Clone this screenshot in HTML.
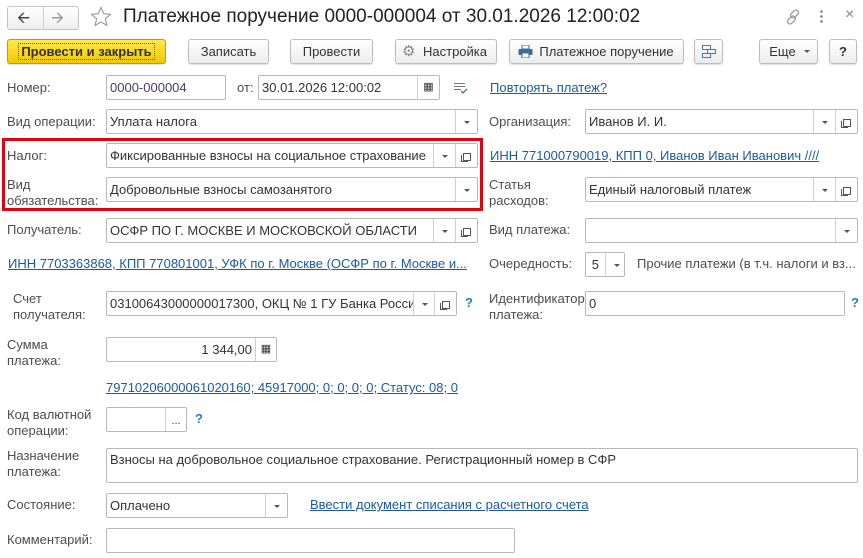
<!DOCTYPE html>
<html><head><meta charset="utf-8"><style>
*{box-sizing:border-box;margin:0;padding:0}
body{width:863px;height:558px;background:#fff;font-family:"Liberation Sans",Arial,sans-serif;font-size:13px;color:#333;position:relative;overflow:hidden}
.a{position:absolute;white-space:nowrap}
.lbl{position:absolute;color:#4d4d4d;line-height:16px;white-space:nowrap}
.in{position:absolute;border:1px solid #b8b8b8;border-radius:2px;background:#fff;height:25px;line-height:23px;padding-left:3px;overflow:hidden;white-space:nowrap;color:#333}
.sb{position:absolute;top:0;bottom:0;width:22px;border-left:1px solid #d0d0d0;background:#fff}
.dd::after{content:"";position:absolute;left:8px;top:11px;border:3px solid transparent;border-top:3px solid #555;border-bottom:0}
.op::before{content:"";position:absolute;left:7px;top:9px;width:6px;height:6px;border:1px solid #555;background:#fff}
.op::after{content:"";position:absolute;left:5px;top:11px;width:6px;height:6px;border-left:1px solid #555;border-bottom:1px solid #555}
.btn{position:absolute;top:39px;height:25px;border:1px solid #bdbdbd;border-radius:3px;background:linear-gradient(#fff,#ececec);text-align:center;line-height:23px;color:#333;box-shadow:0 1px 1px rgba(0,0,0,.12)}
.lnk{position:absolute;color:#1a5aa6;text-decoration:underline;white-space:nowrap}
.q{position:absolute;color:#1e7fd0;font-weight:bold}
</style></head><body>
<div class="a" style="left:7px;top:6px;width:72px;height:24px;border:1px solid #c4c4c4;border-radius:3px;background:linear-gradient(#fff,#eee)"></div>
<div class="a" style="left:43px;top:7px;width:1px;height:22px;background:#d0d0d0"></div>
<div class="a" style="left:17px;top:7px;font-size:16px;color:#444">&#129128;</div>
<div class="a" style="left:51px;top:7px;font-size:16px;color:#999">&#129130;</div>
<svg class="a" style="left:90px;top:6px" width="22" height="22" viewBox="0 0 22 22"><path d="M11 1.5l2.8 6.2 6.7.6-5.1 4.5 1.5 6.6L11 16l-5.9 3.4 1.5-6.6L1.5 8.3l6.7-.6z" fill="none" stroke="#999" stroke-width="1.1"/></svg>
<div class="a" style="left:123px;top:6px;font-size:19px;color:#222">Платежное поручение 0000-000004 от 30.01.2026 12:00:02</div>
<svg class="a" style="left:784px;top:8px" width="18" height="18" viewBox="0 0 18 18"><g fill="none" stroke="#999" stroke-width="1.3"><rect x="8" y="1.5" width="5" height="9" rx="2.5" transform="rotate(45 10.5 6)"/><rect x="5" y="7.5" width="5" height="9" rx="2.5" transform="rotate(45 7.5 12)"/></g></svg>
<div class="a" style="left:820px;top:9px;width:3px;height:15px;background:radial-gradient(circle,#888 1.2px,transparent 1.5px) 0 0/3px 5px"></div>
<div class="a" style="left:845px;top:6px;font-size:16px;color:#888">×</div>

<div class="btn" style="left:7px;width:159px;background:linear-gradient(#ffe94d,#f2c800);border-color:#b9a200;font-weight:bold;color:#333"><span style="outline:1px dotted #555;padding:0 2px">Провести и закрыть</span></div>
<div class="btn" style="left:188px;width:81px">Записать</div>
<div class="btn" style="left:290px;width:83px">Провести</div>
<div class="btn" style="left:395px;width:102px;padding-left:18px">Настройка<span class="a" style="left:6px;top:0;color:#888;font-size:15px">⚙</span></div>
<div class="btn" style="left:509px;width:175px;padding-left:20px">Платежное поручение<svg class="a" style="left:8px;top:5px" width="15" height="13" viewBox="0 0 15 13"><rect x="4" y="0" width="7" height="4" fill="#fff" stroke="#3b6e9a"/><rect x="0.5" y="4" width="14" height="6" rx="1" fill="#3b6e9a"/><rect x="4" y="8" width="7" height="5" fill="#fff" stroke="#3b6e9a"/></svg></div>
<div class="btn" style="left:694px;width:29px"><svg style="margin-top:4px" width="16" height="15" viewBox="0 0 16 15"><g fill="none" stroke="#3b7bbf"><rect x="1.5" y="1.5" width="8" height="4"/><rect x="6.5" y="5.5" width="8" height="4"/><rect x="1.5" y="9.5" width="8" height="4"/></g></svg></div>
<div class="btn" style="left:759px;width:59px;padding-right:12px">Еще<span class="a" style="left:44px;top:10px;border:3px solid transparent;border-top:3px solid #555;border-bottom:0"></span></div>
<div class="btn" style="left:829px;width:28px;font-weight:bold">?</div>

<div class="lbl" style="left:7px;top:80px">Номер:</div>
<div class="in" style="left:106px;top:75px;width:120px;color:#4a3b6b">0000-000004</div>
<div class="lbl" style="left:237px;top:80px">от:</div>
<div class="in" style="left:258px;top:75px;width:182px">30.01.2026 12:00:02<div class="sb" style="right:0;text-align:center;font-size:11px">▦</div></div>
<svg class="a" style="left:453px;top:82px" width="15" height="13" viewBox="0 0 15 13"><g stroke="#777"><path d="M1 1.5h11M1 4.5h11M1 7.5h7"/></g><path d="M8 9l2 2 4-4" stroke="#3aa035" stroke-width="1.5" fill="none"/></svg>
<div class="lnk" style="left:490px;top:80px">Повторять платеж?</div>

<div class="lbl" style="left:7px;top:114px">Вид операции:</div>
<div class="in" style="left:106px;top:109px;width:372px">Уплата налога<div class="sb dd" style="right:0"></div></div>
<div class="lbl" style="left:489px;top:114px">Организация:</div>
<div class="in" style="left:585px;top:109px;width:273px">Иванов И. И.<div class="sb dd" style="right:22px"></div><div class="sb op" style="right:0"></div></div>

<div class="a" style="left:2px;top:138px;width:481px;height:73px;border:3px solid #e3000f"></div>
<div class="lbl" style="left:7px;top:148px">Налог:</div>
<div class="in" style="left:106px;top:143px;width:372px">Фиксированные взносы на социальное страхование<div class="sb dd" style="right:22px"></div><div class="sb op" style="right:0"></div></div>
<div class="lnk" style="left:490px;top:148px">ИНН 771000790019, КПП 0, Иванов Иван Иванович ////</div>
<div class="lbl" style="left:7px;top:177px">Вид<br>обязательства:</div>
<div class="in" style="left:106px;top:177px;width:372px">Добровольные взносы самозанятого<div class="sb dd" style="right:0"></div></div>
<div class="lbl" style="left:489px;top:177px">Статья<br>расходов:</div>
<div class="in" style="left:585px;top:177px;width:273px">Единый налоговый платеж<div class="sb dd" style="right:22px"></div><div class="sb op" style="right:0"></div></div>

<div class="lbl" style="left:7px;top:222px">Получатель:</div>
<div class="in" style="left:106px;top:218px;width:372px">ОСФР ПО Г. МОСКВЕ И МОСКОВСКОЙ ОБЛАСТИ<div class="sb dd" style="right:22px"></div><div class="sb op" style="right:0"></div></div>
<div class="lbl" style="left:489px;top:222px">Вид платежа:</div>
<div class="in" style="left:585px;top:218px;width:273px"><div class="sb dd" style="right:0"></div></div>

<div class="lnk" style="left:8px;top:256px">ИНН 7703363868, КПП 770801001, УФК по г. Москве (ОСФР по г. Москве и...</div>
<div class="lbl" style="left:489px;top:256px">Очередность:</div>
<div class="in" style="left:585px;top:252px;width:40px;text-align:right;padding-right:25px">5<div class="sb dd" style="right:0;width:19px"></div></div>
<div class="lbl" style="left:637px;top:256px">Прочие платежи (в т.ч. налоги и вз...</div>

<div class="lbl" style="left:13px;top:291px">Счет<br>получателя:</div>
<div class="in" style="left:106px;top:291px;width:351px">03100643000000017300, ОКЦ № 1 ГУ Банка России<div class="sb dd" style="right:21px"></div><div class="sb op" style="right:0"></div></div>
<div class="q" style="left:465px;top:295px">?</div>
<div class="lbl" style="left:489px;top:291px">Идентификатор<br>платежа:</div>
<div class="in" style="left:585px;top:291px;width:260px">0</div>
<div class="q" style="left:851px;top:295px">?</div>

<div class="lbl" style="left:7px;top:337px">Сумма<br>платежа:</div>
<div class="in" style="left:106px;top:337px;width:171px;text-align:right;padding-right:24px">1 344,00<div class="sb" style="right:0;width:21px;text-align:center;font-size:11px">▦</div></div>
<div class="lnk" style="left:106px;top:380px">79710206000061020160; 45917000; 0; 0; 0; 0; Статус: 08; 0</div>

<div class="lbl" style="left:7px;top:407px">Код валютной<br>операции:</div>
<div class="in" style="left:106px;top:407px;width:81px"><div class="sb" style="right:0;width:21px;text-align:center;line-height:26px;font-size:11px">...</div></div>
<div class="q" style="left:195px;top:411px">?</div>

<div class="lbl" style="left:7px;top:448px">Назначение<br>платежа:</div>
<div class="in" style="left:106px;top:448px;width:752px;height:35px;line-height:20px;padding-top:1px">Взносы на добровольное социальное страхование. Регистрационный номер в СФР</div>

<div class="lbl" style="left:7px;top:497px">Состояние:</div>
<div class="in" style="left:106px;top:493px;width:182px">Оплачено<div class="sb dd" style="right:0"></div></div>
<div class="lnk" style="left:310px;top:497px">Ввести документ списания с расчетного счета</div>

<div class="lbl" style="left:7px;top:532px">Комментарий:</div>
<div class="in" style="left:106px;top:528px;width:409px"></div>
</body></html>
